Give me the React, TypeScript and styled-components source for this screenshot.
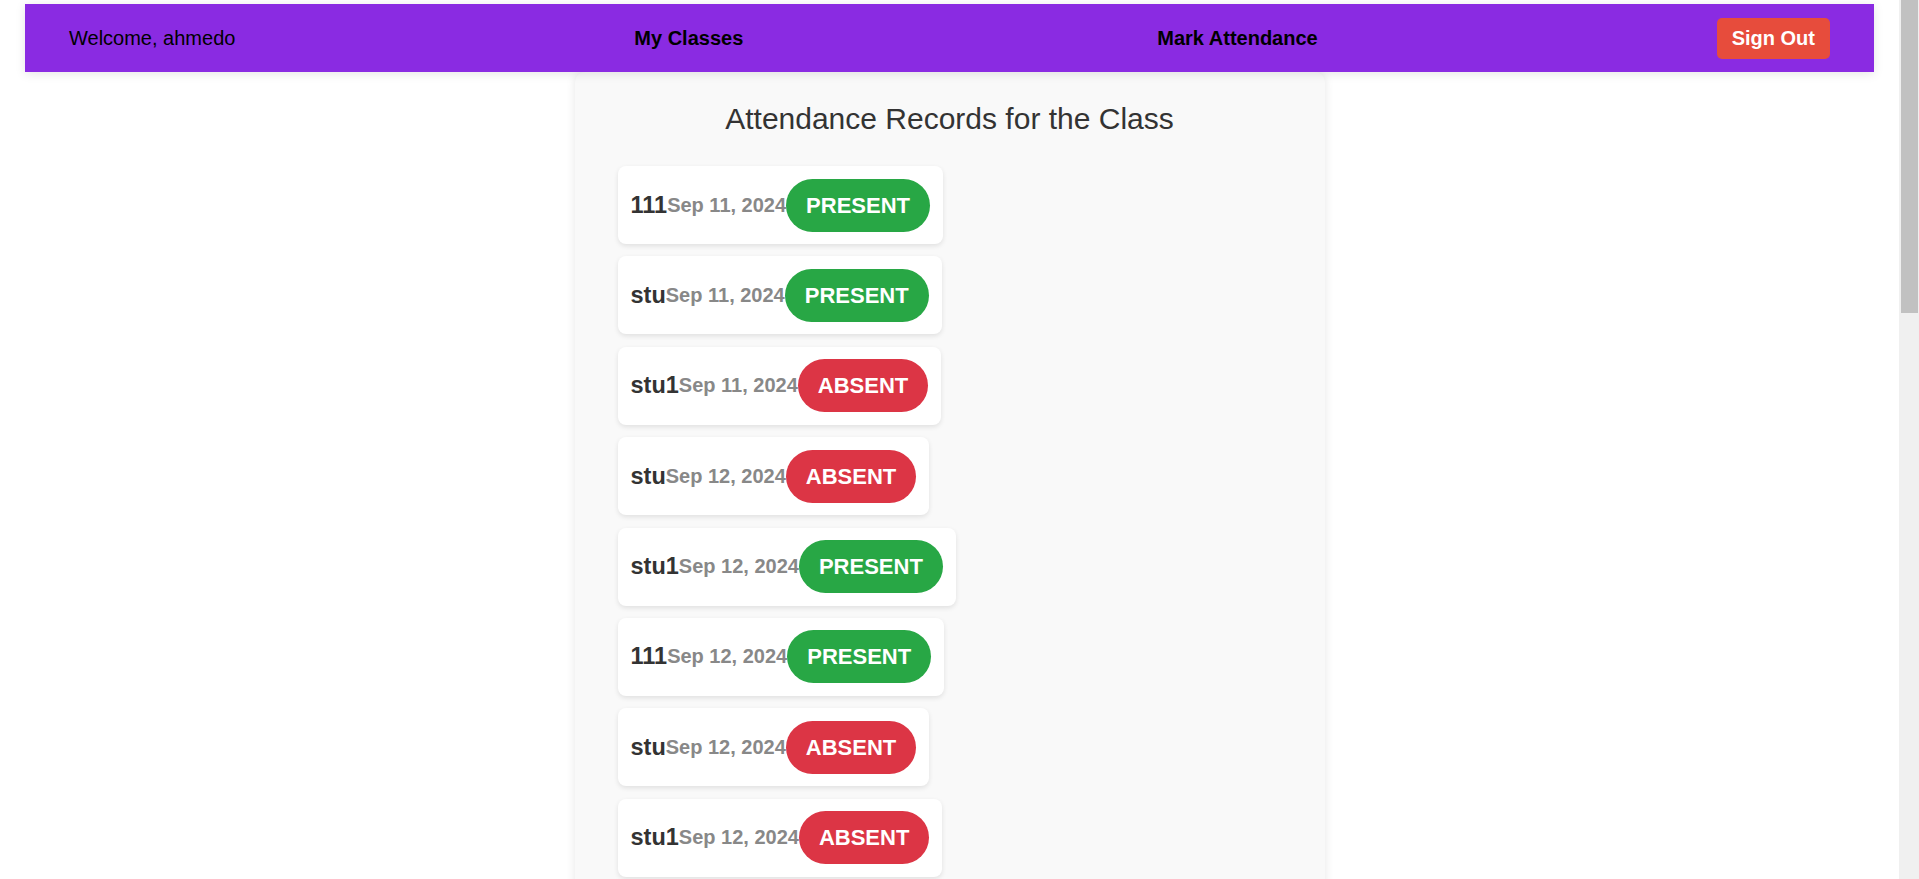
import React from "react";
import styled, { createGlobalStyle } from "styled-components";

const GlobalStyle = createGlobalStyle`
  html, body {
    margin: 0;
    padding: 0;
    background: #ffffff;
    font-family: "Liberation Sans", Arial, Helvetica, sans-serif;
  }
  html {
    scrollbar-width: none;
  }
  ::-webkit-scrollbar {
    width: 0;
  }
`;

const Page = styled.div`
  padding: 4px 20px 20px 0;
`;

const ScrollTrack = styled.div`
  position: fixed;
  top: 0;
  right: 0;
  width: 20px;
  height: 100vh;
  background: #f0f0f0;
  z-index: 10;
`;

const ScrollThumb = styled.div`
  margin: 0 1px 0 2px;
  height: 313px;
  background: #c1c1c1;
`;

const NavBar = styled.nav`
  position: relative;
  z-index: 1;
  margin: 0 25px;
  height: 68px;
  padding: 0 44px;
  background: #8a2be2;
  box-shadow: 0 2px 10px rgba(0, 0, 0, 0.1);
  display: flex;
  align-items: center;
  justify-content: space-between;
  font-size: 20px;
  color: #000;
`;

const Welcome = styled.span`
  font-weight: normal;
`;

const NavLinks = styled.div`
  display: flex;
  align-items: center;
  gap: 414px;
`;

const NavLink = styled.a`
  font-weight: bold;
  color: #000;
  text-decoration: none;
  cursor: pointer;
`;

const SignOutButton = styled.button`
  font-family: inherit;
  font-size: 20px;
  font-weight: bold;
  line-height: 23px;
  color: #fff;
  background: #e74c3c;
  border: none;
  border-radius: 5px;
  padding: 9px 15px;
  cursor: pointer;
`;

const Container = styled.main`
  max-width: 750px;
  margin: 0 auto;
  background: #f9f9f9;
  border-radius: 10px;
  box-shadow: 0 0 10px rgba(0, 0, 0, 0.1);
  padding: 30px 43px 35px;
  box-sizing: border-box;
`;

const Title = styled.h2`
  margin: 0 0 30px;
  font-size: 30px;
  font-weight: normal;
  color: #333;
  text-align: center;
  line-height: normal;
`;

const RecordList = styled.ul`
  list-style: none;
  margin: 0;
  padding: 0;
  display: flex;
  flex-direction: column;
  align-items: flex-start;
  gap: 12.4px;
`;

const RecordCard = styled.li`
  display: flex;
  align-items: center;
  background: #fff;
  border-radius: 8px;
  padding: 12.5px 13px;
  box-shadow: 0 2px 5px rgba(0, 0, 0, 0.1);
`;

const StudentName = styled.span`
  font-size: 23.5px;
  font-weight: bold;
  color: #333;
`;

const RecordDate = styled.span`
  font-size: 20px;
  font-weight: bold;
  color: #888;
`;

const StatusPill = styled.span<{ $present: boolean }>`
  font-size: 22px;
  font-weight: bold;
  line-height: 25px;
  color: #fff;
  padding: 14px 20px;
  border-radius: 30px;
  background: ${(p) => (p.$present ? "#28a745" : "#dc3545")};
`;

type Rec = { name: string; date: string; status: "PRESENT" | "ABSENT" };

const records: Rec[] = [
  { name: "111", date: "Sep 11, 2024", status: "PRESENT" },
  { name: "stu", date: "Sep 11, 2024", status: "PRESENT" },
  { name: "stu1", date: "Sep 11, 2024", status: "ABSENT" },
  { name: "stu", date: "Sep 12, 2024", status: "ABSENT" },
  { name: "stu1", date: "Sep 12, 2024", status: "PRESENT" },
  { name: "111", date: "Sep 12, 2024", status: "PRESENT" },
  { name: "stu", date: "Sep 12, 2024", status: "ABSENT" },
  { name: "stu1", date: "Sep 12, 2024", status: "ABSENT" },
  { name: "111", date: "Sep 13, 2024", status: "PRESENT" },
  { name: "stu", date: "Sep 13, 2024", status: "PRESENT" },
  { name: "stu1", date: "Sep 13, 2024", status: "ABSENT" },
  { name: "111", date: "Sep 14, 2024", status: "ABSENT" },
  { name: "stu", date: "Sep 14, 2024", status: "PRESENT" },
  { name: "stu1", date: "Sep 14, 2024", status: "PRESENT" },
  { name: "111", date: "Sep 15, 2024", status: "PRESENT" },
  { name: "stu", date: "Sep 15, 2024", status: "ABSENT" },
  { name: "stu1", date: "Sep 15, 2024", status: "PRESENT" },
  { name: "111", date: "Sep 16, 2024", status: "ABSENT" },
  { name: "stu", date: "Sep 16, 2024", status: "PRESENT" },
  { name: "stu1", date: "Sep 16, 2024", status: "ABSENT" },
  { name: "111", date: "Sep 17, 2024", status: "PRESENT" },
  { name: "stu", date: "Sep 17, 2024", status: "PRESENT" },
  { name: "stu1", date: "Sep 17, 2024", status: "ABSENT" },
  { name: "111", date: "Sep 18, 2024", status: "PRESENT" },
  { name: "stu", date: "Sep 18, 2024", status: "ABSENT" },
];

export default function App() {
  return (
    <>
      <GlobalStyle />
      <Page>
        <NavBar>
          <Welcome>Welcome, ahmedo</Welcome>
          <NavLinks>
            <NavLink>My Classes</NavLink>
            <NavLink>Mark Attendance</NavLink>
          </NavLinks>
          <SignOutButton>Sign Out</SignOutButton>
        </NavBar>
        <Container>
          <Title>Attendance Records for the Class</Title>
          <RecordList>
            {records.map((r, i) => (
              <RecordCard key={i}>
                <StudentName>{r.name}</StudentName>
                <RecordDate>{r.date}</RecordDate>
                <StatusPill $present={r.status === "PRESENT"}>{r.status}</StatusPill>
              </RecordCard>
            ))}
          </RecordList>
        </Container>
      </Page>
      <ScrollTrack>
        <ScrollThumb />
      </ScrollTrack>
    </>
  );
}
